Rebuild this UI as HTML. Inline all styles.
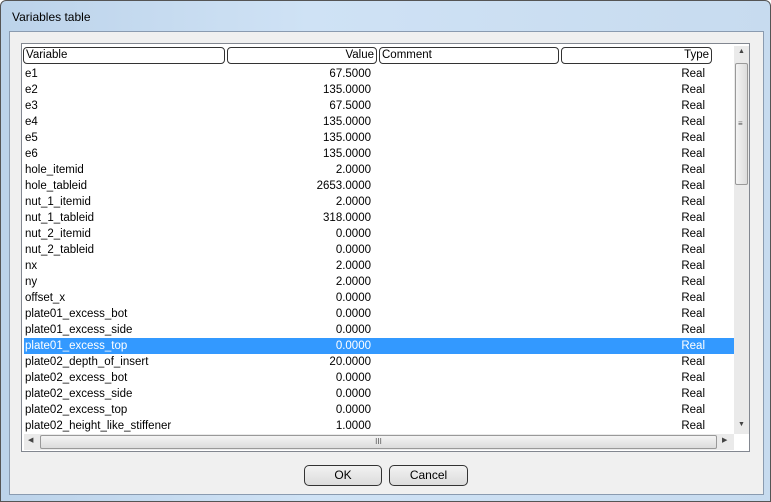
<!DOCTYPE html><html><head><style>
*{margin:0;padding:0;box-sizing:border-box}
body{width:771px;height:502px;overflow:hidden;background:#fff;font-family:"Liberation Sans",sans-serif;font-size:11.5px;color:#000;position:relative}
.win{position:absolute;left:0;top:0;width:771px;height:502px;border:1px solid #555;border-radius:6px 6px 0 0;background:linear-gradient(90deg,#bcd3ea,#cfe2f5 40%,#c7dbef);}
.title{position:absolute;left:11px;top:9px;font-size:12px}
.client{position:absolute;left:8px;top:30px;width:755px;height:464px;background:#f0f0f0;border:1px solid #8a9bb0}
.tbl{position:absolute;left:20px;top:42px;width:729px;height:409px;background:#fff;border:1px solid #828790}
.hd{position:absolute;top:3px;height:17px;border:1px solid #333;border-radius:4px;background:#fff;padding:0 2px;line-height:15px}
.row{position:absolute;left:2px;width:710px;height:16px;line-height:16px}
.row span{position:absolute}
.sel{background:#3399ff;color:#fff}
.vs{position:absolute;left:712px;top:2px;width:15px;height:388px;background:#eaeaea}
.hs{position:absolute;left:2px;top:390px;width:710px;height:16px;background:#eaeaea}
.btn{position:absolute;top:464px;height:21px;border:1px solid #333;border-radius:5px;background:linear-gradient(#f2f2f2,#dcdcdc);text-align:center;line-height:19px;font-size:12px}
</style></head><body>
<div class="win"><div class="title">Variables table</div>
<div class="client"></div>
<div class="tbl">
<div class="hd" style="left:1px;width:202px">Variable</div>
<div class="hd" style="left:205px;width:150px;text-align:right">Value</div>
<div class="hd" style="left:357px;width:180px">Comment</div>
<div class="hd" style="left:539px;width:151px;text-align:right">Type</div>
<div id="rows"></div>
<div class="vs"><div style="position:absolute;left:1px;top:17px;width:13px;height:122px;border:1px solid #999;border-radius:2px;background:linear-gradient(90deg,#f4f4f4,#dcdcdc)"></div><div style="position:absolute;top:2px;left:4px;font-size:7px;color:#444">▲</div><div style="position:absolute;top:375px;left:4px;font-size:7px;color:#444">▼</div><div style="position:absolute;top:73px;left:4px;font-size:8px;color:#555">≡</div></div>
<div class="hs"><div style="position:absolute;left:16px;top:1px;width:677px;height:14px;border:1px solid #999;border-radius:2px;background:linear-gradient(#f4f4f4,#dcdcdc);text-align:center;font-size:8px;line-height:12px;color:#555">III</div><div style="position:absolute;left:4px;top:2px;font-size:7px;color:#444">◀</div><div style="position:absolute;left:698px;top:2px;font-size:7px;color:#444">▶</div></div>
</div>
<div class="btn" style="left:303px;width:78px">OK</div>
<div class="btn" style="left:388px;width:79px">Cancel</div>
</div>
<script>
var d=[["e1","67.5000"],["e2","135.0000"],["e3","67.5000"],["e4","135.0000"],["e5","135.0000"],["e6","135.0000"],["hole_itemid","2.0000"],["hole_tableid","2653.0000"],["nut_1_itemid","2.0000"],["nut_1_tableid","318.0000"],["nut_2_itemid","0.0000"],["nut_2_tableid","0.0000"],["nx","2.0000"],["ny","2.0000"],["offset_x","0.0000"],["plate01_excess_bot","0.0000"],["plate01_excess_side","0.0000"],["plate01_excess_top","0.0000"],["plate02_depth_of_insert","20.0000"],["plate02_excess_bot","0.0000"],["plate02_excess_side","0.0000"],["plate02_excess_top","0.0000"],["plate02_height_like_stiffener","1.0000"]];
var h="";d.forEach(function(r,i){h+='<div class="row'+(i==17?' sel':'')+'" style="top:'+(22+i*16)+'px"><span style="left:1px">'+r[0]+'</span><span style="right:363px">'+r[1]+'</span><span style="right:29px">Real</span></div>'});
document.getElementById("rows").innerHTML=h;
</script>
</body></html>
